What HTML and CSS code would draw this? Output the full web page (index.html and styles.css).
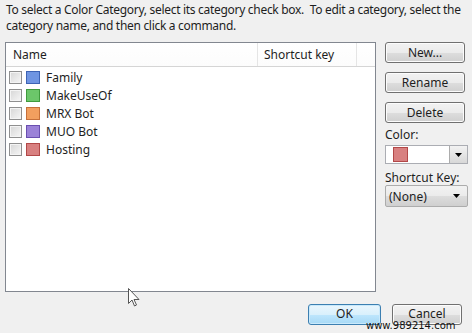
FILE: index.html
```html
<!DOCTYPE html>
<html>
<head>
<meta charset="utf-8">
<link rel="stylesheet" href="styles.css">
</head>
<body>
<div class="dialog">
  <p class="intro">To select a Color Category, select its category check box.&nbsp; To edit a category, select the<br>category name, and then click a command.</p>
  <div class="main">
    <div class="list">
      <div class="head">
        <div class="col-name">Name</div>
        <div class="col-key">Shortcut key</div>
        <div class="col-rest"></div>
      </div>
      <div class="rows">
        <div class="row"><span class="chk"></span><span class="sw blue"></span><span class="label">Family</span></div>
        <div class="row"><span class="chk"></span><span class="sw green"></span><span class="label">MakeUseOf</span></div>
        <div class="row"><span class="chk"></span><span class="sw orange"></span><span class="label">MRX Bot</span></div>
        <div class="row"><span class="chk"></span><span class="sw purple"></span><span class="label">MUO Bot</span></div>
        <div class="row"><span class="chk"></span><span class="sw red"></span><span class="label">Hosting</span></div>
      </div>
    </div>
    <div class="side">
      <button class="btn">New...</button>
      <button class="btn">Rename</button>
      <button class="btn">Delete</button>
      <div class="fld-label color-label">Color:</div>
      <div class="combo">
        <div class="combo-val"><span class="sw red big"></span></div>
        <div class="combo-btn"><svg width="7" height="4" viewBox="0 0 7 4"><path d="M0 0h7L3.5 4z" fill="#000"/></svg></div>
      </div>
      <div class="fld-label key-label">Shortcut Key:</div>
      <div class="select">
        <span>(None)</span>
        <svg width="7" height="4" viewBox="0 0 7 4"><path d="M0 0h7L3.5 4z" fill="#000"/></svg>
      </div>
    </div>
  </div>
  <div class="footer">
    <button class="btn ok">OK</button>
    <button class="btn cancel">Cancel</button>
  </div>
  <span class="wm">www.989214.com</span>
  <svg class="cursor" width="12" height="19" viewBox="0 0 12 19"><path d="M0.5 0.5v15l3.5-3.5 2.5 6 2-1-2.5-5.5h5z" fill="#fff" stroke="#555" stroke-width="1"/></svg>
</div>
</body>
</html>
```

FILE: styles.css
```css
* { box-sizing: border-box; }
html, body { margin: 0; padding: 0; }
body {
  background: #f0f0f0;
  font-family: "Noto Sans", "Open Sans", sans-serif;
  font-size: 12px;
  color: #1e1e1e;
  width: 472px;
  height: 333px;
  overflow: hidden;
}
.dialog { position: relative; width: 472px; height: 333px; }
.intro {
  margin: 0;
  padding: 2px 0 0 6px;
  line-height: 16px;
  width: 472px;
  white-space: nowrap;
  letter-spacing: -0.3px;
}
.main {
  display: flex;
  margin-top: 8px;
  padding-left: 5px;
}
.list {
  width: 371px;
  height: 250px;
  background: #fff;
  border: 1px solid #828790;
}
.head {
  display: flex;
  height: 24px;
  border-bottom: 1px solid #d5d5d5;
  background: linear-gradient(#fff, #fcfcfc);
}
.head > div {
  line-height: 23px;
  border-right: 1px solid #e5e5e5;
}
.col-name { width: 252px; padding-left: 7px; }
.col-key { width: 99px; padding-left: 6px; }
.col-rest { flex: 1; border-right: none !important; }
.rows { padding-top: 1px; }
.row {
  display: flex;
  align-items: center;
  height: 18px;
  padding-left: 3px;
}
.chk {
  width: 13px;
  height: 13px;
  border: 1px solid #8f8f8f;
  background: linear-gradient(135deg, #d6d6d6, #f6f6f6);
  box-shadow: inset 0 0 0 1px #f4f4f4;
}
.sw {
  display: inline-block;
  width: 14px;
  height: 13px;
  margin-left: 4px;
  border: 1px solid;
}
.blue { background: #6f95e2; border-color: #3d63b4; }
.green { background: #6cc66a; border-color: #3f9a3d; }
.orange { background: #f29f5f; border-color: #c6703a; }
.purple { background: #9b82d8; border-color: #6a4fb0; }
.red { background: #d88080; border-color: #b24848; }
.label { margin-left: 6px; }
.side {
  display: flex;
  flex-direction: column;
  padding-left: 9px;
  width: 92px;
}
.btn {
  font-family: inherit;
  font-size: 12px;
  color: #1e1e1e;
  width: 80px;
  height: 21px;
  padding: 0;
  border: 1px solid #707070;
  border-radius: 3px;
  background: linear-gradient(#f2f2f2 0%, #ebebeb 50%, #dddddd 51%, #cfcfcf 100%);
  box-shadow: inset 0 0 0 1px #fcfcfc;
  margin-bottom: 9px;
  line-height: 18px;
}
.fld-label { line-height: 14px; }
.color-label { margin-top: -4px; }
.combo {
  display: flex;
  width: 83px;
  height: 19px;
  margin-top: 3px;
  border: 1px solid #abadb3;
  background: #fff;
}
.combo-val { flex: 1; padding: 1px 0 0 7px; }
.combo-val .sw { margin-left: 0; width: 15px; height: 15px; }
.combo-btn {
  width: 18px;
  border-left: 1px solid #acacac;
  background: linear-gradient(#f2f2f2, #d8d8d8);
  display: flex;
  align-items: center;
  justify-content: center;
}
.key-label { margin-top: 7px; }
.select {
  display: flex;
  align-items: center;
  justify-content: space-between;
  width: 83px;
  height: 22px;
  margin-top: 0;
  padding: 0 7px 0 3px;
  border: 1px solid #acacac;
  border-radius: 2px;
  background: linear-gradient(#f2f2f2 0%, #ebebeb 50%, #dddddd 51%, #cfcfcf 100%);
}
.footer {
  display: flex;
  justify-content: flex-end;
  gap: 11px;
  padding-right: 10px;
  margin-top: 12px;
}
.footer .btn { margin: 0; width: 73px; height: 21px; line-height: 15px; padding-bottom: 3px; }
.ok {
  border-color: #3c7fb1 !important;
  background: linear-gradient(#eaf6fd 0%, #d9f0fc 50%, #bee6fd 51%, #a7d9f5 100%) !important;
  box-shadow: inset 0 0 0 1px #c9e9fb !important;
}
.cancel { width: 70px !important; }
.wm {
  position: absolute;
  left: 366px;
  top: 321px;
  font-family: "DejaVu Sans", sans-serif;
  font-size: 10px;
  color: #111;
  line-height: 10px;
}
.cursor { position: absolute; left: 128px; top: 288px; }
```
